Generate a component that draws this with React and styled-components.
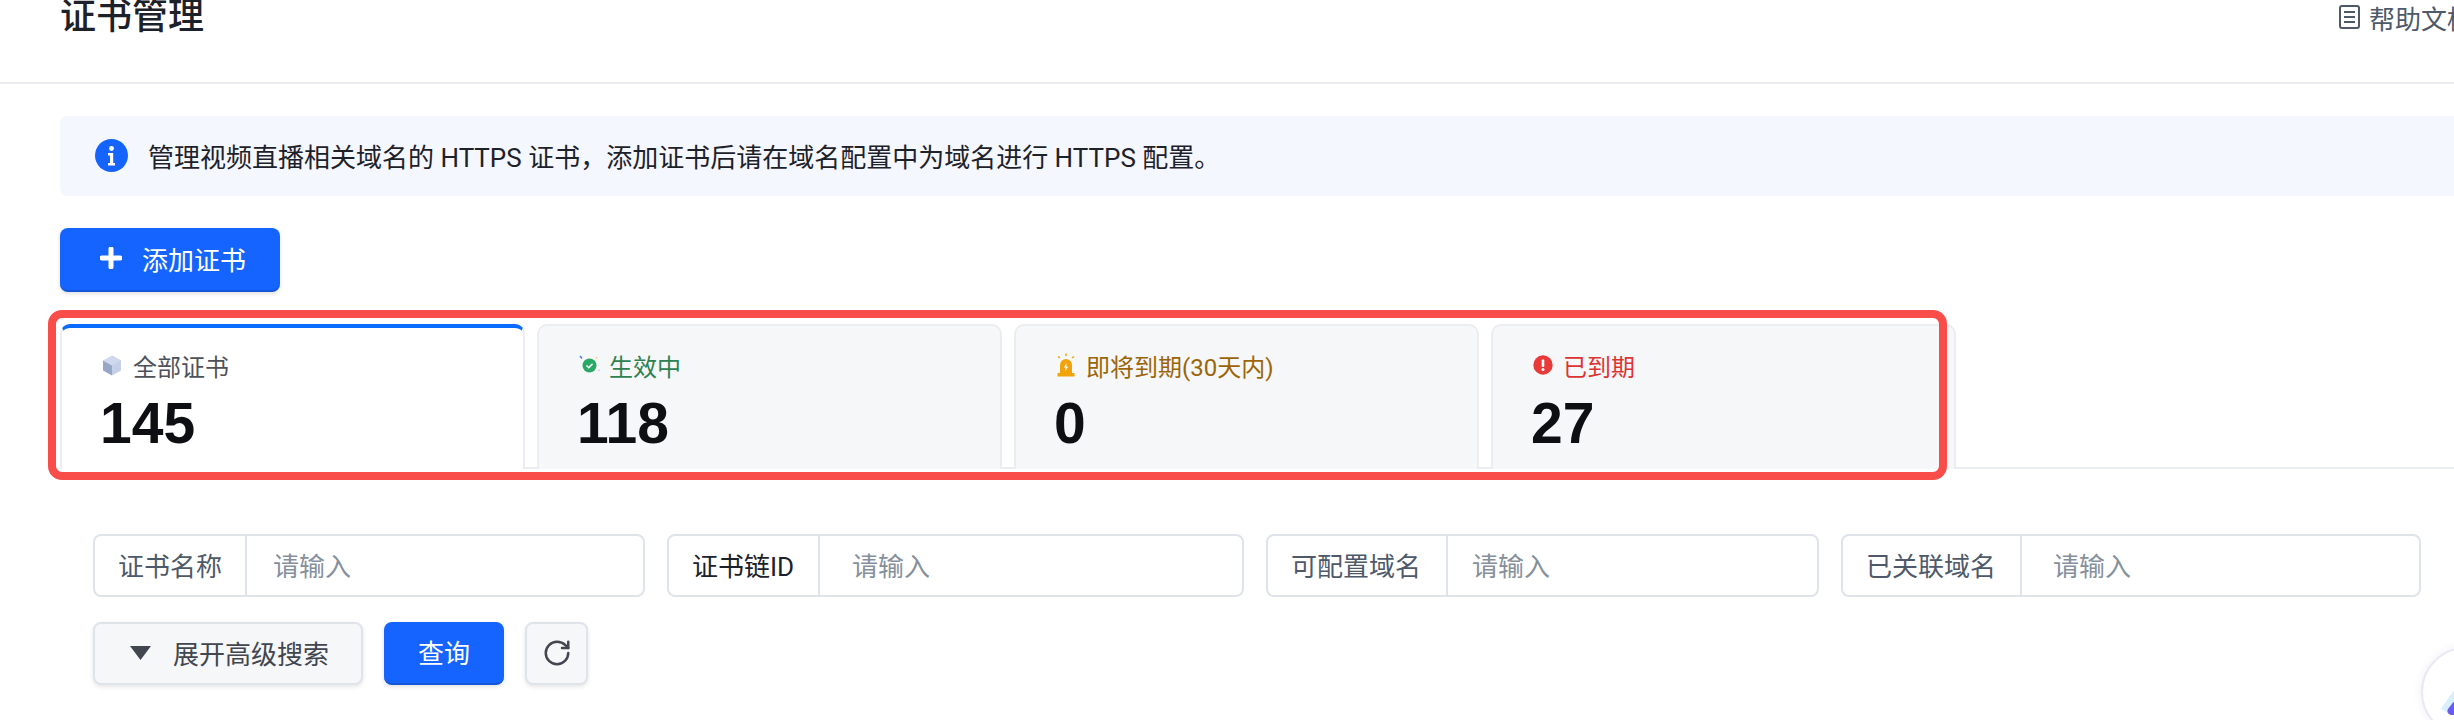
import React from 'react'
import styled, { createGlobalStyle } from 'styled-components'
import { RotateCw } from 'lucide-react'

const GlobalStyle = createGlobalStyle`
  html, body {
    margin: 0;
    height: 720px;
    overflow: hidden;
    background: #fff;
    font-family: Roboto, "Noto Sans CJK SC", sans-serif;
  }
  * { box-sizing: border-box; }
`

const Page = styled.div`
  position: relative;
  width: 2454px;
  height: 720px;
  overflow: hidden;
`

const Header = styled.header`
  display: flex;
  justify-content: space-between;
  align-items: flex-start;
  width: 2473px;
  height: 84px;
  padding-left: 60px;
  border-bottom: 2px solid #eaebf1;
`

const Title = styled.h1`
  margin: -3px 0 0;
  font-size: 36px;
  line-height: 40px;
  font-weight: 500;
  color: #1d2129;
`

const HelpLink = styled.a`
  display: flex;
  align-items: center;
  gap: 9px;
  height: 34px;
  font-size: 26px;
  color: #4e5969;
  white-space: nowrap;
`

const Main = styled.main`
  padding: 32px 0 0 60px;
`

const Banner = styled.div`
  display: flex;
  align-items: center;
  gap: 20px;
  height: 80px;
  width: 2400px;
  padding: 0 0 2px 35px;
  background: #f4f7fe;
  border-radius: 8px;
  font-size: 26px;
  color: #1d2129;
`

const PrimaryButton = styled.button`
  display: flex;
  align-items: center;
  justify-content: center;
  gap: ${p => p.$gap || 0}px;
  width: ${p => p.$width}px;
  height: ${p => p.$height || 63}px;
  padding: 0 0 2px ${p => p.$indent || 0}px;
  border: 0;
  border-bottom: 2px solid #1456d8;
  border-radius: 8px;
  background: #1664ff;
  color: #fff;
  font: inherit;
  font-size: 26px;
  box-shadow: 0 2px 4px rgba(0, 0, 0, 0.12);
`

const AddButton = styled(PrimaryButton)`
  margin-top: 32px;
`

const TabBar = styled.div`
  position: relative;
  display: flex;
  gap: 12px;
  height: 145px;
  margin-top: 32px;
  border-bottom: 2px solid #eaedf1;
`

const Tab = styled.div`
  width: 465px;
  height: 145px;
  padding: ${p => (p.$active ? 21 : 23)}px 0 0 40px;
  border: 2px solid #ebedf2;
  border-top: ${p => (p.$active ? '4px solid #0a6cff' : '2px solid #ebedf2')};
  border-bottom: 0;
  border-radius: 10px 10px 0 0;
  background: ${p => (p.$active ? '#fff' : '#f6f7f9')};
`

const TabLabel = styled.div`
  display: flex;
  align-items: center;
  gap: ${p => p.$gap}px;
  height: 32px;
  font-size: 24px;
  color: ${p => p.$color};
`

const TabCount = styled.div`
  margin-top: 12px;
  margin-left: -2px;
  font-family: "Liberation Sans", sans-serif;
  font-size: 57px;
  line-height: 60px;
  font-weight: 700;
  color: #0d0f12;
`

const Highlight = styled.div`
  position: absolute;
  left: -12px;
  top: -14px;
  width: 1899px;
  height: 170px;
  border: 8px solid #f94d4a;
  border-radius: 14px;
  pointer-events: none;
`

const FilterRow = styled.div`
  display: flex;
  gap: 22px;
  margin-top: 65px;
  padding-left: 33px;
`

const FilterGroup = styled.div`
  display: flex;
  width: ${p => p.$width}px;
  height: 63px;
  border: 2px solid #dfe3ea;
  border-radius: 8px;
  font-size: 26px;
`

const FilterLabel = styled.label`
  display: flex;
  align-items: center;
  flex: none;
  width: ${p => p.$width}px;
  padding: 0 0 2px 23px;
  border-right: 2px solid #dfe3ea;
  color: ${p => p.$color || '#4e5969'};
  white-space: nowrap;
`

const Placeholder = styled.span`
  display: flex;
  align-items: center;
  padding: 0 0 2px ${p => p.$indent}px;
  color: #86909c;
`

const ActionRow = styled.div`
  display: flex;
  gap: 21px;
  margin-top: 25px;
  padding-left: 33px;
`

const GhostButton = styled.button`
  display: flex;
  align-items: center;
  justify-content: center;
  gap: ${p => p.$gap || 0}px;
  width: ${p => p.$width}px;
  height: 63px;
  padding: 0 0 2px ${p => p.$indent || 0}px;
  border: 2px solid #dfe3ea;
  border-radius: 8px;
  background: #f6f7f9;
  color: #41464f;
  font: inherit;
  font-size: 26px;
  box-shadow: 0 2px 4px rgba(0, 0, 0, 0.1);
`

const FloatingBadge = styled.div`
  position: absolute;
  left: 2421px;
  top: 647px;
  width: 90px;
  height: 90px;
  border: 2px solid #e8e9f2;
  border-radius: 50%;
  background: #fff;
  box-shadow: 0 0 10px rgba(60, 60, 120, 0.08);
`

const InfoIcon = () => (
  <svg width="33" height="33" viewBox="0 0 33 33">
    <circle cx="16.5" cy="16.5" r="16.5" fill="#1664ff" />
    <circle cx="16.5" cy="9.5" r="2.4" fill="#fff" />
    <path d="M13 14h5.2v10H20v2.4h-7V24h2v-7.6h-2z" fill="#fff" />
  </svg>
)

const PlusIcon = () => (
  <svg width="22" height="22" viewBox="0 0 22 22">
    <path d="M11 2v18M2 11h18" stroke="#fff" strokeWidth="5" strokeLinecap="round" />
  </svg>
)

const HelpIcon = () => (
  <svg width="21" height="24" viewBox="0 0 21 24" fill="none" stroke="#4e5969" strokeWidth="2">
    <rect x="1" y="1" width="19" height="22" rx="2" />
    <path d="M5 7h11M5 12h11M5 17h11" />
  </svg>
)

const CubeIcon = () => (
  <svg width="21" height="21" viewBox="0 0 21 21">
    <path d="M10 0.5l9 5v10l-9 5z" fill="#c5d0e8" />
    <path d="M10 0.5l-9 5 9 5 9-5z" fill="#cfd8ec" />
    <path d="M1 5.5l9 5v10l-9-5z" fill="#98a7c6" />
  </svg>
)

const ActiveIcon = () => (
  <svg width="22" height="22" viewBox="0 0 22 22">
    <circle cx="10.5" cy="11.5" r="7" fill="#2aa866" />
    <path d="M7.5 11.5l2.2 2.2 3.8-3.8" fill="none" stroke="#fff" strokeWidth="1.6" />
    <path d="M1 2l2 2.5" stroke="#4d7ef0" strokeWidth="1.5" />
    <path d="M18 3l-1 1.5" stroke="#f2c66d" strokeWidth="1.2" />
    <path d="M21 16l-2 .8" stroke="#c9c5f5" strokeWidth="1.2" />
  </svg>
)

const AlarmIcon = () => (
  <svg width="20" height="24" viewBox="0 0 20 24">
    <path d="M4 21v-9a6 6 0 0 1 12 0v9z" fill="#f0a30a" />
    <rect x="1.5" y="20" width="17" height="3.5" fill="#f0a30a" />
    <path d="M10.8 10l-3 4.5h2l-.6 3.5 3-4.6h-2z" fill="#fff" />
    <path d="M10 0.5v2.5M2 3.5l2 1.5M18 3.5l-2 1.5" stroke="#f0a30a" strokeWidth="1.4" />
  </svg>
)

const ExpiredIcon = () => (
  <svg width="20" height="20" viewBox="0 0 20 20">
    <circle cx="10" cy="10" r="9.7" fill="#e93a3a" />
    <rect x="8.7" y="4.5" width="2.6" height="7.5" rx="1" fill="#fff" />
    <circle cx="10" cy="14.6" r="1.5" fill="#fff" />
  </svg>
)

const TriangleIcon = () => (
  <svg width="21" height="14" viewBox="0 0 21 14">
    <path d="M0 0h21L10.5 14z" fill="#41464f" />
  </svg>
)

const AssistantLogo = () => (
  <svg width="40" height="50" viewBox="0 0 40 50" style={{ margin: '32px 0 0 18px' }}>
    <path d="M18 2L0 28l8 4L24 6z" fill="#d6f0fd" />
    <path d="M18 14L7 28a4 4 0 0 0 3 6h16V14z" fill="#6a5cf0" />
  </svg>
)

const tabs = [
  { name: '全部证书', count: 145, color: '#4e5159', gap: 10, icon: <CubeIcon />, active: true },
  { name: '生效中', count: 118, color: '#2e8150', gap: 8, icon: <ActiveIcon /> },
  { name: '即将到期(30天内)', count: 0, color: '#9c6508', gap: 10, icon: <AlarmIcon /> },
  { name: '已到期', count: 27, color: '#dd3333', gap: 10, icon: <ExpiredIcon /> },
]

const filters = [
  { name: '证书名称', width: 552, labelWidth: 152, indent: 26 },
  { name: '证书链ID', width: 577, labelWidth: 151, indent: 32, color: '#1d2129' },
  { name: '可配置域名', width: 553, labelWidth: 180, indent: 24 },
  { name: '已关联域名', width: 580, labelWidth: 179, indent: 31 },
]

const App = () => (
  <Page>
    <GlobalStyle />
    <Header>
      <Title>证书管理</Title>
      <HelpLink><HelpIcon />帮助文档</HelpLink>
    </Header>
    <Main>
      <Banner>
        <InfoIcon />
        管理视频直播相关域名的 HTTPS 证书，添加证书后请在域名配置中为域名进行 HTTPS 配置。
      </Banner>
      <AddButton $width={220} $height={64} $gap={20} $indent={6}><PlusIcon />添加证书</AddButton>
      <TabBar>
        {tabs.map(tab => (
          <Tab key={tab.name} $active={tab.active}>
            <TabLabel $color={tab.color} $gap={tab.gap}>{tab.icon}{tab.name}</TabLabel>
            <TabCount>{tab.count}</TabCount>
          </Tab>
        ))}
        <Highlight />
      </TabBar>
      <FilterRow>
        {filters.map(filter => (
          <FilterGroup key={filter.name} $width={filter.width}>
            <FilterLabel $width={filter.labelWidth} $color={filter.color}>{filter.name}</FilterLabel>
            <Placeholder $indent={filter.indent}>请输入</Placeholder>
          </FilterGroup>
        ))}
      </FilterRow>
      <ActionRow>
        <GhostButton $width={270} $gap={22} $indent={3}><TriangleIcon />展开高级搜索</GhostButton>
        <PrimaryButton $width={120}>查询</PrimaryButton>
        <GhostButton $width={63}><RotateCw size={30} strokeWidth={2} /></GhostButton>
      </ActionRow>
    </Main>
    <FloatingBadge><AssistantLogo /></FloatingBadge>
  </Page>
)

export default App
